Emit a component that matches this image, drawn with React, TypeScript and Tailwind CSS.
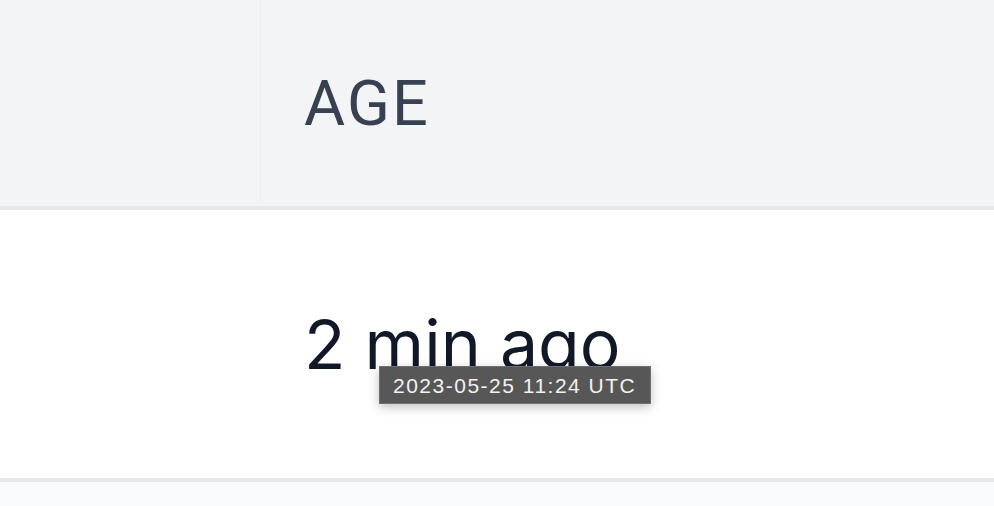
import React from 'react';

export default function App() {
  return (
    <div className="w-[994px] h-[506px] overflow-hidden bg-white" style={{ fontFamily: 'Inter, "Noto Sans", sans-serif' }}>
      {/* Header row */}
      <div className="flex h-[210px] bg-[#f3f4f6] border-b-4 border-[#e5e7eb]">
        <div className="w-[261px] border-r border-[#eceef1]" />
        <div className="flex-1 flex items-center pl-[43px]">
          <span
            className="text-[63px] leading-none tracking-[0.035em] text-[#374151]"
            style={{ fontFamily: 'Roboto, Inter, sans-serif' }}
          >
            AGE
          </span>
        </div>
      </div>

      {/* Body row */}
      <div className="flex h-[272px] border-b-4 border-[#e5e7eb]">
        <div className="w-[261px]" />
        <div className="flex-1 flex items-center pl-[43px]">
          <div className="relative">
            <span className="text-[68px] leading-none text-[#111827]">2 min ago</span>
            <div className="absolute left-[75px] top-[56px] w-[272px] h-[38px] flex items-center pl-[13px] bg-[#575757] border border-[#707070] shadow-[0_3px_10px_rgba(0,0,0,0.25)]">
              <span
                className="text-[21px] leading-none tracking-[1.5px] text-[#f2f2f2]"
                style={{ fontFamily: '"Liberation Sans", Arial, sans-serif' }}
              >
                2023-05-25 11:24 UTC
              </span>
            </div>
          </div>
        </div>
      </div>

      {/* Next row */}
      <div className="h-[40px] bg-[#f9fafb]" />
    </div>
  );
}
